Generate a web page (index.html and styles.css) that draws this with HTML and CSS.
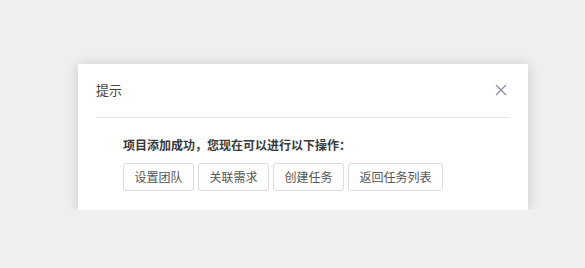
FILE: index.html
```html
<!DOCTYPE html>
<html lang="zh-CN">
<head>
    <meta charset="UTF-8">
    <title>提示</title>
    <link rel="stylesheet" href="styles.css">
</head>
<body>
    <div class="dialog">
        <div class="dialogHeader">
            <span class="dialogTitle">提示</span>
            <span class="closeBtn">
                <svg width="12" height="12" viewBox="0 0 12 12">
                    <path d="M1 1 L11 11 M11 1 L1 11" stroke="#8a90a3" stroke-width="1.4" fill="none"/>
                </svg>
            </span>
        </div>
        <div class="dialogBody">
            <p class="message">项目添加成功，您现在可以进行以下操作：</p>
            <div class="actions">
                <button class="btn">设置团队</button>
                <button class="btn">关联需求</button>
                <button class="btn">创建任务</button>
                <button class="btn">返回任务列表</button>
            </div>
        </div>
    </div>
</body>
</html>
```

FILE: styles.css
```css
body {
    margin: 0;
    background-color: #efefef;
    font-family: "Noto Sans CJK SC", "Noto Sans", sans-serif;
    color: #333;
}

.dialog {
    width: 450px;
    margin: 64px 0 0 78px;
    background-color: white;
    box-shadow: 0 1px 12px rgba(0, 0, 0, 0.16);
    padding: 0 18px 19px;
    box-sizing: border-box;
}

.dialogHeader {
    display: flex;
    justify-content: space-between;
    align-items: center;
    padding: 16px 3px 17px 0;
    border-bottom: 1px solid #e4e6ea;
}

.dialogTitle {
    font-size: 13px;
    line-height: 20px;
    color: #444;
}

.closeBtn {
    display: flex;
}

.dialogBody {
    padding: 17px 0 0 27px;
}

.message {
    margin: 0 0 8px;
    font-size: 12px;
    line-height: 20px;
    font-weight: bold;
    color: #3a3a3a;
}

.actions {
    display: flex;
    gap: 4px;
}

.btn {
    font-family: inherit;
    font-size: 12px;
    line-height: 26px;
    height: 28px;
    padding: 0 10.5px;
    color: #555;
    background-color: white;
    border: 1px solid #d9dce3;
    border-radius: 3px;
}
```
